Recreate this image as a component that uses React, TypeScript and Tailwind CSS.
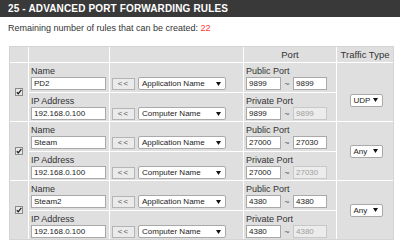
import React from "react";

type Rule = {
  name: string;
  ip: string;
  pub1: string;
  pub2: string;
  priv1: string;
  priv2: string;
  traffic: string;
  tpad: string;
};

const rules: Rule[] = [
  { name: "PD2", ip: "192.168.0.100", pub1: "9899", pub2: "9899", priv1: "9899", priv2: "9899", traffic: "UDP", tpad: "pt-[16px]" },
  { name: "Steam", ip: "192.168.0.100", pub1: "27000", pub2: "27030", priv1: "27000", priv2: "27030", traffic: "Any", tpad: "pt-0" },
  { name: "Steam2", ip: "192.168.0.100", pub1: "4380", pub2: "4380", priv1: "4380", priv2: "4380", traffic: "Any", tpad: "pt-0" },
];

const font = { fontFamily: '"Liberation Sans", Arial, sans-serif' };

function Arrow() {
  return (
    <svg width="5" height="4" viewBox="0 0 5 4" className="shrink-0">
      <path d="M0 0 H5 L2.5 4 Z" fill="#111" />
    </svg>
  );
}

function TextBox({ value, w, disabled }: { value: string; w: string; disabled?: boolean }) {
  return (
    <div
      className={`${w} h-[13px] border px-[2px] text-[8px] leading-[11px] overflow-hidden whitespace-nowrap ${
        disabled ? "border-[#c8c8c8] bg-[#ececec] text-[#a0a0a0]" : "border-[#a9a9a9] bg-white text-[#222]"
      }`}
    >
      {value}
    </div>
  );
}

function SelectBox({ label, w }: { label: string; w: string }) {
  return (
    <div
      className={`${w} flex h-[13px] items-center justify-between rounded-[2px] border border-[#a9a9a9] bg-white pl-[3px] pr-[4px] text-[8px] leading-[11px] text-[#222]`}
    >
      <span className="whitespace-nowrap">{label}</span>
      <Arrow />
    </div>
  );
}

function Btn() {
  return (
    <div className="flex h-[12px] w-[23px] items-center justify-center border border-[#b4b4b4] bg-[#ebebeb] text-[8px] leading-[10px] tracking-[1px] text-[#555]">
      &lt;&lt;
    </div>
  );
}

function Check() {
  return (
    <div className="mx-auto flex h-[8px] w-[8px] items-center justify-center border border-[#8a8a8a] bg-[#e8e8e8]">
      <svg width="6" height="6" viewBox="0 0 6 6">
        <path d="M0.8 3.2 L2.3 4.8 L5.3 0.9" fill="none" stroke="#222" strokeWidth="1.3" />
      </svg>
    </div>
  );
}

function LabelCell({ label, h, children }: { label: string; h: string; children: React.ReactNode }) {
  return (
    <td className={`${h} bg-[#dfdfdf] px-[2px] pt-[3px] align-top`}>
      <div className="text-[9px] leading-[10px] text-[#333]">{label}</div>
      <div className="mt-[1px] flex items-center">{children}</div>
    </td>
  );
}

function MidCell({ label, h }: { label: string; h: string }) {
  return (
    <td className={`${h} bg-[#dfdfdf] pl-[2px] pt-[14px] align-top`}>
      <div className="flex items-center gap-[3px]">
        <Btn />
        <SelectBox label={label} w="w-[88px]" />
      </div>
    </td>
  );
}

function PortPair({ a, b, disabledB }: { a: string; b: string; disabledB?: boolean }) {
  return (
    <div className="flex items-center">
      <TextBox value={a} w="w-[35px]" />
      <span className="w-[12px] text-center text-[9px] leading-[10px] text-[#666]">~</span>
      <TextBox value={b} w="w-[34px]" disabled={disabledB} />
    </div>
  );
}

export default function App() {
  return (
    <div className="h-[243px] w-[400px] overflow-hidden bg-white" style={font}>
      <div className="flex h-[17px] items-end bg-[#393939] pl-[8px] pb-[2px]">
        <span className="text-[10px] font-bold leading-[12px] tracking-[0.15px] text-white">
          25 - ADVANCED PORT FORWARDING RULES
        </span>
      </div>
      <div className="mt-[6px] pl-[8px] text-[9px] leading-[11px] text-[#333]">
        Remaining number of rules that can be created: <span className="text-[#ff3333]">22</span>
      </div>
      <table className="mt-[12px] ml-[9px] border-separate border-spacing-[1px] bg-white outline outline-1 outline-[#d4d4d4] -outline-offset-1">
        <colgroup>
          <col className="w-[18px]" />
          <col className="w-[80px]" />
          <col className="w-[133px]" />
          <col className="w-[92px]" />
          <col className="w-[56px]" />
        </colgroup>
        <thead>
          <tr className="h-[15px]">
            <td className="bg-[#dfdfdf]" />
            <td className="bg-[#dfdfdf]" />
            <td className="bg-[#dfdfdf]" />
            <td className="bg-[#dfdfdf] text-center text-[9.5px] leading-[10px] text-[#333]">Port</td>
            <td className="bg-[#dfdfdf] text-center text-[9.5px] leading-[10px] text-[#333] whitespace-nowrap">
              Traffic Type
            </td>
          </tr>
        </thead>
        <tbody>
          {rules.map((r) => (
            <React.Fragment key={r.name}>
              <tr>
                <td rowSpan={2} className="bg-[#dfdfdf] align-middle">
                  <Check />
                </td>
                <LabelCell label="Name" h="h-[29px]">
                  <TextBox value={r.name} w="w-[75px]" />
                </LabelCell>
                <MidCell label="Application Name" h="h-[29px]" />
                <LabelCell label="Public Port" h="h-[29px]">
                  <PortPair a={r.pub1} b={r.pub2} />
                </LabelCell>
                <td rowSpan={2} className="bg-[#dfdfdf] align-middle">
                  <div className={`flex justify-center pl-[2px] ${r.tpad}`}>
                    <SelectBox label={r.traffic} w="w-[33px]" />
                  </div>
                </td>
              </tr>
              <tr>
                <LabelCell label="IP Address" h="h-[28px]">
                  <TextBox value={r.ip} w="w-[75px]" />
                </LabelCell>
                <MidCell label="Computer Name" h="h-[28px]" />
                <LabelCell label="Private Port" h="h-[28px]">
                  <PortPair a={r.priv1} b={r.priv2} disabledB />
                </LabelCell>
              </tr>
            </React.Fragment>
          ))}
        </tbody>
      </table>
    </div>
  );
}
